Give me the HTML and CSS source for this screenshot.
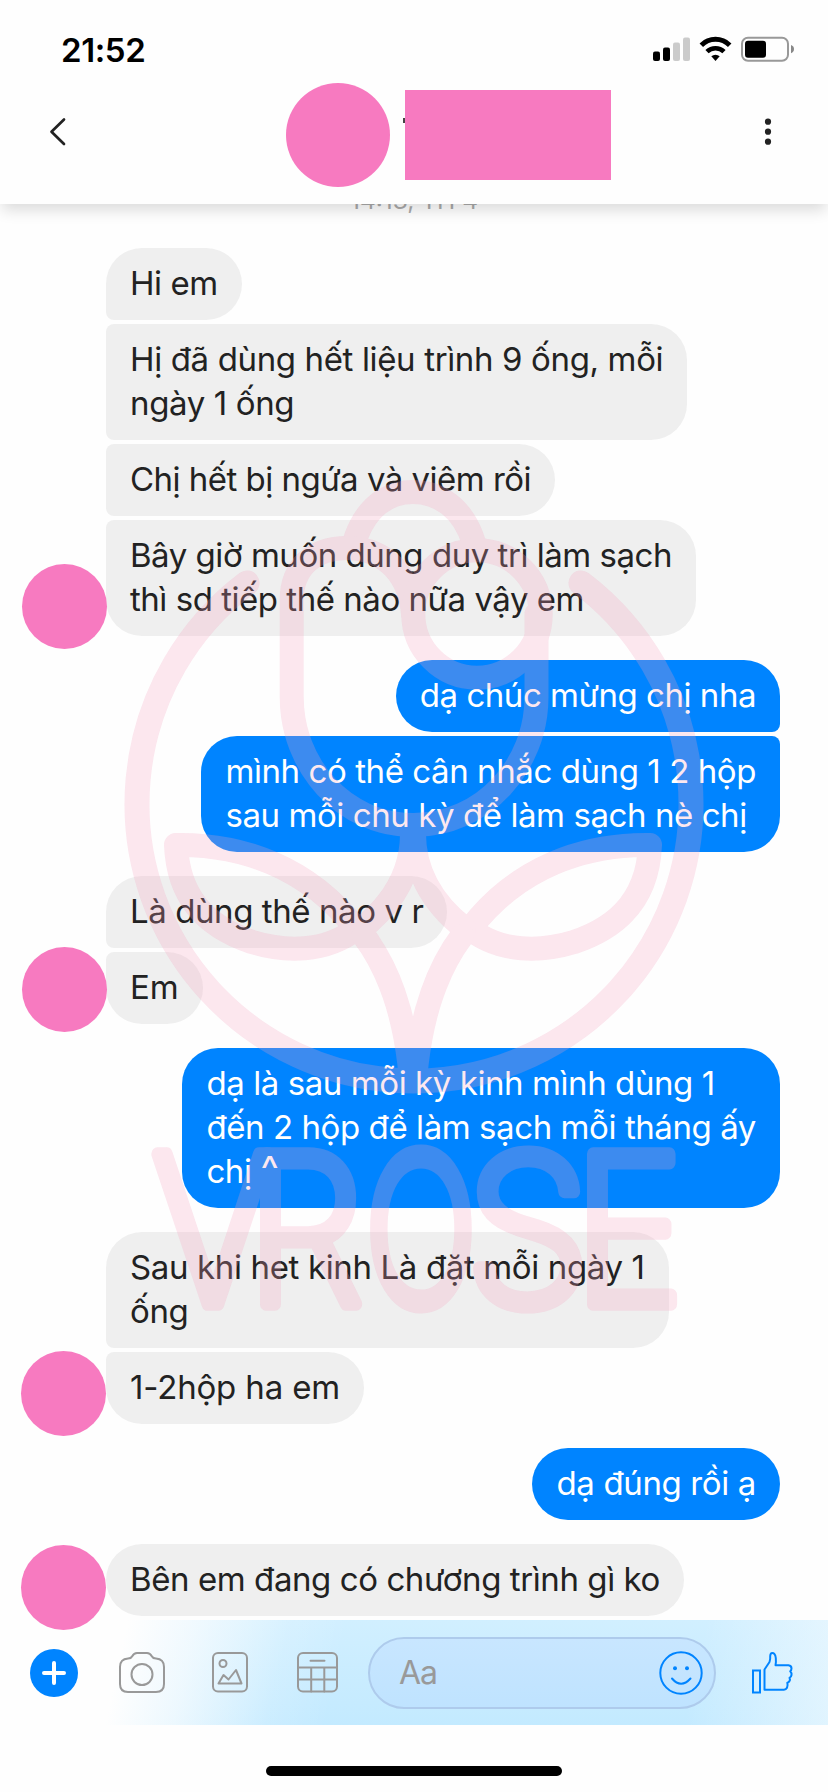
FILE: index.html
```
<!DOCTYPE html>
<html lang="vi">
<head>
<meta charset="utf-8">
<title>Chat</title>
<link rel="stylesheet" href="styles.css">
</head>
<body>
<header class="header">
  <div class="status">
    <span class="clock">21:52</span>
    <svg class="status-icons" viewBox="652 34 144 30" width="144" height="30">
      <rect x="653" y="51.5" width="7" height="9.5" rx="2"/>
      <rect x="663" y="47.5" width="7" height="13.5" rx="2"/>
      <rect x="673" y="42.5" width="7" height="18.5" rx="2" fill="#cbcbcb"/>
      <rect x="683" y="37.5" width="7" height="23.5" rx="2" fill="#cbcbcb"/>
      <path d="M701.3 45.2a20.2 20.2 0 0 1 28.4 0" fill="none" stroke="#000" stroke-width="5"/>
      <path d="M707 51.7a12.2 12.2 0 0 1 17 0" fill="none" stroke="#000" stroke-width="4.6"/>
      <path d="M711.3 56.3a6.2 6.2 0 0 1 8.4 0l-4.2 4.6z"/>
      <rect x="742" y="37.7" width="46" height="23" rx="6" fill="none" stroke="#999" stroke-width="2"/>
      <rect x="745" y="40.7" width="21" height="17" rx="3"/>
      <path d="M791 45c4 1.200 4 7 0 8.200z" fill="#888"/>
    </svg>
  </div>
  <div class="nav">
    <svg class="back" viewBox="48 116 20 32" width="20" height="32"><path d="M64 119.500 51.500 131.700l12.500 12.300" fill="none" stroke="#222" stroke-width="2.700" stroke-linecap="round" stroke-linejoin="round"/></svg>
    <div class="contact">
      <span class="contact-photo"></span>
      <span class="contact-name"></span>
    </div>
    <svg class="more" viewBox="764 118 8 28" width="8" height="28" fill="#222"><circle cx="768" cy="121.700" r="3.100"/><circle cx="768" cy="131.700" r="3.100"/><circle cx="768" cy="141.700" r="3.100"/></svg>
  </div>
</header>

<main class="chat">
  <div class="date">14:13, TH 4</div>

  <section class="group received">
    <p class="bubble">Hi em</p>
    <p class="bubble t35">Hị đã dùng hết liệu trình 9 ống, mỗi<br>ngày 1 ống</p>
    <p class="bubble t50">Chị hết bị ngứa và viêm rồi</p>
    <p class="bubble t46">Bây giờ muốn dùng duy trì làm sạch<br>thì sd tiếp thế nào nữa vậy em</p>
    <span class="avatar a1"></span>
  </section>

  <section class="group sent">
    <p class="bubble t46">dạ chúc mừng chị nha</p>
    <p class="bubble">mình có thể cân nhắc dùng 1 2 hộp<br>sau mỗi chu kỳ để làm sạch nè chị</p>
  </section>

  <section class="group received">
    <p class="bubble">Là dùng thế nào v r</p>
    <p class="bubble t00">Em</p>
    <span class="avatar a2"></span>
  </section>

  <section class="group sent">
    <p class="bubble">dạ là sau mỗi kỳ kinh mình dùng 1<br>đến 2 hộp để làm sạch mỗi tháng ấy<br>chị <span class="caret">^</span></p>
  </section>

  <section class="group received">
    <p class="bubble t35">Sau khi het kinh Là đặt mỗi ngày 1<br>ống</p>
    <p class="bubble t15">1-2hộp ha em</p>
    <span class="avatar a3"></span>
  </section>

  <section class="group sent">
    <p class="bubble t35">dạ đúng rồi ạ</p>
  </section>

  <section class="group received">
    <p class="bubble">Bên em đang có chương trình gì ko</p>
    <span class="avatar a4"></span>
  </section>

  <svg class="watermark" viewBox="110 470 610 860" width="610" height="860">
    <g opacity=".25" fill="none" stroke="#f4a0be" stroke-width="24" stroke-linecap="round" stroke-linejoin="round">
      <path d="M247 583A277 277 0 1 0 581 583" stroke-width="25"/>
      <path d="M354 543C365 507 388 492 413 492S463 507 474 543"/>
      <path d="M413 614C410 575 385 548 347 548C315 548 291.700 566 291.700 600V697C291.700 765 343 825 413.500 825S536.500 765 536.500 697V614"/>
      <circle cx="477" cy="614" r="63.700"/>
      <path d="M176 845C240 844 308 866 356 929C325 953 285 952 252 942C204 926 178 895 176 845z"/>
      <path d="M650 845C586 844 518 866 470 929C501 953 541 952 574 942C622 926 648 895 650 845z"/>
      <path d="M412 830C413 868 395 902 362 928M414 830C413 868 431 902 464 928"/>
      <path d="M364 936C388 968 405 1015 410.500 1075M462 936C438 968 421 1015 415.500 1075"/>
      <g class="brand">
        <text transform="translate(152 1304) scale(.9 1)">V</text>
        <text transform="translate(246.5 1304) scale(.91 1)">R</text>
        <text transform="translate(365.6 1304) scale(.715 1)">O</text>
        <text transform="translate(465.5 1304) scale(.97 1)">S</text>
        <text transform="translate(573.4 1304) scale(.91 1)">E</text>
      </g>
    </g>
  </svg>
</main>

<footer class="composer">
  <svg class="plus" viewBox="0 0 48 48" width="48" height="48"><circle cx="24" cy="24" r="24" fill="#0084ff"/><path d="M24 14v20M14 24h20" stroke="#fff" stroke-width="4" stroke-linecap="round"/></svg>
  <svg class="tool camera" viewBox="118 1652 48 44" width="48" height="44"><path d="M120 1668q0-8 8-8.500q3 0 4-2q2-3.500 5-3.500h10q3 0 5 3.500q1 2 4 2q8 .5 8 8.500v17q0 8-8 8h-28q-8 0-8-8z"/><circle cx="142" cy="1675.500" r="10.500"/></svg>
  <svg class="tool photo" viewBox="211 1651 38 43" width="38" height="43"><rect x="213" y="1653" width="34" height="38.500" rx="5"/><circle cx="223" cy="1663.500" r="3.500"/><path d="M218.500 1683.500 223.500 1675 228.500 1679.500 236 1670 241.500 1683.500z"/></svg>
  <svg class="tool calendar" viewBox="296 1651 43 43" width="43" height="43"><rect x="298" y="1653" width="39" height="38.500" rx="5"/><path d="M298 1667.500h39M298 1679.500h39M311.200 1667.500v24M324.300 1667.500v24M310.500 1660.700h14"/></svg>
  <div class="input">
    <span class="placeholder">Aa</span>
    <svg class="smile" viewBox="0 0 44 44" width="44" height="44"><circle cx="22" cy="22" r="20.700" fill="none" stroke="#0084ff" stroke-width="2"/><circle cx="16" cy="17.300" r="2" fill="#0084ff"/><circle cx="28" cy="17.300" r="2" fill="#0084ff"/><path d="M13 27.500q9 10.500 18.500 0" fill="none" stroke="#0084ff" stroke-width="2" stroke-linecap="round"/></svg>
  </div>
  <svg class="like" viewBox="751 1649 44 46" width="44" height="46"><g fill="none" stroke="#0084ff" stroke-width="2" stroke-linejoin="round"><path d="M753 1669.500h7v22h-7z" stroke-linejoin="miter"/><path d="M764.500 1688.700v-20.200l5-7.500q1-2.500.7-6q.2-3 2-3q3 0 3.600 5q.4 4-.3 7.300h13q3 .3 3 3.200q0 1.800-1.300 2.700q1.600 1.600 1.300 3.800q-.3 2-2 2.800q1 2-.2 3.500q-1 1.200-2 1.500q.8 2.500-.3 5q-1 1.900-3 1.900z"/></g></svg>
</footer>
<div class="home"><span class="home-bar"></span></div>
</body>
</html>
```
FILE: styles.css
```
* { box-sizing: border-box; }

body {
  margin: 0;
  width: 828px;
  height: 1792px;
  display: flex;
  flex-direction: column;
  overflow: hidden;
  background: #fefefe;
  color: #222;
  font-family: Inter, "Noto Sans", sans-serif;
}

.header {
  position: relative;
  z-index: 2;
  flex: none;
  height: 204px;
  background: #fefefe;
  box-shadow: 0 8px 14px -2px rgba(0, 0, 0, .14);
}

.status {
  height: 72px;
  padding: 27px 32px 0 61px;
  display: flex;
  justify-content: space-between;
}

.clock {
  font-size: 33px;
  font-weight: 600;
  line-height: 46px;
  letter-spacing: -.4px;
  color: #000;
}

.status-icons { margin-top: 7px; }

.nav {
  display: flex;
  align-items: center;
  height: 120px;
  padding: 0 56px 0 48px;
}

.back, .more { flex: none; }

.contact {
  display: flex;
  align-items: center;
  gap: 15px;
  margin: 6px auto 0 217.500px;
}

.contact-photo {
  width: 104px;
  height: 104px;
  border-radius: 50%;
  background: #f77ac0;
}

.contact-name {
  position: relative;
  width: 206px;
  height: 90px;
  background: #f77ac0;
}

.contact-name::before {
  content: "";
  position: absolute;
  left: -2px;
  top: 28px;
  width: 2px;
  height: 5px;
  background: #444;
}

.chat {
  position: relative;
  flex: none;
  height: 1416px;
  padding: 0 48px 0 106px;
  display: flex;
  flex-direction: column;
  gap: 24px;
}

.date {
  height: 44px;
  margin: -18px -48px -6px -106px;
  font-size: 24.5px;
  line-height: 29px;
  text-align: center;
  color: #aaa;
}

.group {
  position: relative;
  display: flex;
  flex-direction: column;
  gap: 4px;
}

.received { align-items: flex-start; }
.sent { align-items: flex-end; }

.bubble {
  margin: 0;
  padding: 13px 24px 15px;
  border-radius: 36px;
  font-size: 33px;
  line-height: 44px;
  letter-spacing: -.42px;
  white-space: nowrap;
}

.received .bubble { background: #efefef; }
.sent .bubble { background: #0084ff; color: #fff; }

.received .bubble:not(:nth-last-child(2)) { border-bottom-left-radius: 8px; }
.received .bubble + .bubble { border-top-left-radius: 8px; }
.sent .bubble:not(:last-child) { border-bottom-right-radius: 8px; }
.sent .bubble + .bubble { border-top-right-radius: 8px; }

.caret { font-size: 39px; line-height: 1; }

.t00 { letter-spacing: 0; }
.t15 { letter-spacing: -.16px; }
.t35 { letter-spacing: -.36px; }
.t46 { letter-spacing: -.47px; }
.t50 { letter-spacing: -.52px; }

.avatar {
  position: absolute;
  left: -84px;
  width: 85px;
  height: 85px;
  border-radius: 50%;
  background: #f77ac0;
}

.a1 { bottom: -13px; }
.a2 { bottom: -8px; }
.a3 { bottom: -12px; left: -85px; }
.a4 { bottom: -14px; left: -85px; z-index: 3; }

.watermark {
  position: absolute;
  left: 110px;
  top: 266px;
  pointer-events: none;
}

.brand {
  font-family: Inter, sans-serif;
  font-size: 206px;
  font-weight: 200;
  fill: #f4a0be;
  stroke-width: 13px;
}

.brand text { vector-effect: non-scaling-stroke; }

.composer {
  flex: none;
  height: 105px;
  display: flex;
  align-items: center;
  padding: 0 33px 0 30px;
  background:
    linear-gradient(102deg, #fefefe 15%, rgba(254, 254, 254, .7) 23%, rgba(254, 254, 254, .15) 34%, rgba(254, 254, 254, 0) 41%, rgba(254, 254, 254, 0) 83%, rgba(254, 254, 254, .5) 100%),
    linear-gradient(#d1efff, #c3eaff);
}

.composer svg { flex: none; }
.camera { margin-left: 40px; }
.photo { margin-left: 45px; }
.calendar { margin-left: 47px; }

.tool {
  fill: none;
  stroke: #999;
  stroke-width: 2;
  stroke-linejoin: round;
  stroke-linecap: round;
}

.input {
  flex: none;
  width: 348px;
  height: 72px;
  margin-left: 29px;
  padding: 0 11px 0 29px;
  display: flex;
  align-items: center;
  justify-content: space-between;
  border: 2px solid #aecbec;
  border-radius: 36px;
  background: linear-gradient(#c8e6ff, #bfe3ff);
}

.placeholder {
  font-size: 32px;
  color: #999;
  letter-spacing: -1px;
}

.like { margin-left: 35px; }

.home {
  flex: 1;
  display: flex;
  justify-content: center;
  padding-top: 41px;
}

.home-bar {
  width: 296px;
  height: 10px;
  border-radius: 5px;
  background: #000;
}
```
